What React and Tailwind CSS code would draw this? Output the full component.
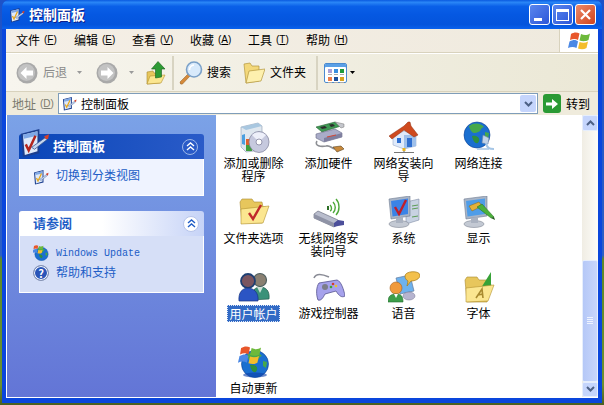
import React from "react";

const CJK = "font-['Noto_Sans_CJK_SC','Liberation_Sans',sans-serif]";

// ---- small drawn icons ----
function Svg({ size = 32, className = "", children }) {
  return (
    <svg width={size} height={size} viewBox="0 0 32 32" className={`block shrink-0 ${className}`}>
      {children}
    </svg>
  );
}

function ControlPanelIcon({ size = 32, check = "#b3261e" }) {
  return (
    <Svg size={size}>
      <path d="M2 7 L21 2 L21 27 L4 31 Z" fill="#1c3f8f" />
      <path d="M4 8 L19 4.5 L19 25 L6 29 Z" fill="#dfeafa" />
      <path d="M4 8 L19 4.5 L19 9 L5 12 Z" fill="#7fa8e6" />
      <path d="M7 18 L10 24 L17 9" fill="none" stroke={check} strokeWidth="2.6" />
      <path d="M13 21 L27 11 L29 13 L16 23 Z" fill="#c6d6ee" stroke="#38558f" strokeWidth="0.8" />
      <path d="M26 9.5 L31 7.5 L30 12.5 L27.5 12.5 Z" fill="#d6412b" />
    </Svg>
  );
}

function AddRemoveIcon() {
  return (
    <Svg>
      <path d="M3 6 L20 2 L24 5 L24 29 L8 31 L3 26 Z" fill="#dfe7ef" stroke="#8c9bb0" strokeWidth="0.6" />
      <path d="M3 6 L20 2 L24 5 L8 9 Z" fill="#a8c7e0" />
      <path d="M4 14 L7 13 L7 24 L4 23 Z" fill="#4b9fe0" />
      <rect x="8" y="18" width="6" height="6" fill="#e0602a" />
      <rect x="8" y="24" width="6" height="6" fill="#3e9e3a" />
      <rect x="14" y="18" width="4" height="6" fill="#3f78d8" />
      <ellipse cx="21" cy="21" rx="10" ry="10.5" fill="#c6c9de" stroke="#7c7e98" strokeWidth="0.7" />
      <path d="M21 21 L14 14 A10 10 0 0 1 28 14 Z" fill="#eef0fa" />
      <circle cx="21" cy="21" r="3" fill="#fff" stroke="#80829c" strokeWidth="0.8" />
    </Svg>
  );
}

function HardwareIcon() {
  return (
    <Svg>
      <path d="M3 6 L22 1 L28 5 L9 11 Z" fill="#3f9a54" stroke="#255f33" strokeWidth="0.6" />
      <path d="M7 6 L12 5 L14 7 L9 8 Z M16 3.5 L20 3 L22 5 L18 6 Z" fill="#2d2d2d" />
      <path d="M22 1 L31 3 L31 6 L28 7 Z" fill="#c4c6cc" stroke="#777" strokeWidth="0.5" />
      <path d="M3 13 L22 8 L29 12 L29 16 L11 21 L3 17 Z" fill="#a9acc8" stroke="#686a86" strokeWidth="0.6" />
      <path d="M11 17 L29 12 L29 16 L11 21 Z" fill="#7f7f9f" />
      <path d="M14 16 L23 14" stroke="#d04a3a" strokeWidth="1.2" />
      <path d="M4 20 C1 25 8 26 13 25 C17 24 18 27 22 28" fill="none" stroke="#8d8f94" strokeWidth="1.6" />
      <path d="M20 26 L28 25 L31 28 L24 31 Z" fill="#c98a3c" stroke="#5b4322" strokeWidth="0.6" />
    </Svg>
  );
}

function HouseIcon() {
  return (
    <Svg>
      <path d="M5 15 L16 10 L28 14 L28 25 L16 28 L5 24 Z" fill="#dfeafb" stroke="#8a9dbd" strokeWidth="0.5" />
      <path d="M16 14 L28 14 L28 25 L16 28 Z" fill="#9fc0ea" />
      <path d="M1 15 L16 5 L20 1 L22 1 L23 5 L30 14 L26 16 L16 9 L4 18 Z" fill="#cf4a1e" stroke="#8d2f10" strokeWidth="0.5" />
      <rect x="9" y="17" width="4" height="5" fill="#2f6fd0" />
      <rect x="19" y="17" width="5" height="9" fill="#2f6fd0" />
      <path d="M16 28 L16 32 M6 31.5 L26 31.5" stroke="#777" strokeWidth="1.2" />
      <rect x="14.5" y="27" width="3" height="3" fill="#e8b423" />
    </Svg>
  );
}

function Globe({ cx = 14, cy = 14, r = 13 }) {
  return (
    <g>
      <circle cx={cx} cy={cy} r={r} fill="#1a6fd0" stroke="#0e3f92" strokeWidth="0.6" />
      <path
        d={`M${cx - 8} ${cy - 9} C${cx - 3} ${cy - 13} ${cx + 4} ${cy - 12} ${cx + 7} ${cy - 8} C${cx + 3} ${cy - 7} ${cx + 4} ${cy - 3} ${cx + 1} ${cy - 3} C${cx - 2} ${cy - 1} ${cx - 6} ${cy - 1} ${cx - 8} ${cy - 9} Z`}
        fill="#46a84b"
      />
      <path d={`M${cx - 5} ${cy + 1} C${cx} ${cy} ${cx + 3} ${cy + 3} ${cx + 2} ${cy + 6} C${cx} ${cy + 11} ${cx - 4} ${cy + 7} ${cx - 5} ${cy + 1} Z`} fill="#2e8f3f" />
      <path d={`M${cx + 8} ${cy - 3} L${cx + 12} ${cy - 2} L${cx + 11} ${cy + 4} L${cx + 8} ${cy + 2} Z`} fill="#46a84b" />
    </g>
  );
}

function NetConnIcon() {
  return (
    <Svg>
      <Globe />
      <path d="M20 14 L26 17 L25 23 L19 22 Z" fill="#c2d3e8" stroke="#6c83a6" strokeWidth="0.6" />
      <path d="M23 22 C24 27 26 28 31 28" fill="none" stroke="#a6c6e6" strokeWidth="2" />
      <path d="M14 28 L26 28" stroke="#a6c6e6" strokeWidth="1.5" />
    </Svg>
  );
}

function FolderBase({ children }) {
  return (
    <Svg>
      <path d="M2 6 L4 3 L14 3 L16 6 L24 6 L25 11 L28 11 L24 27 L4 27 Z" fill="#e7c65c" stroke="#a98a2f" strokeWidth="0.6" />
      <path d="M3 13 L31 10 L25 27 L3 28 Z" fill="#fbe690" stroke="#b1902f" strokeWidth="0.6" />
      {children}
    </Svg>
  );
}

function WirelessIcon() {
  return (
    <Svg>
      <path d="M1 18 L5 15 L25 24 L25 28 L21 31 L1 22 Z" fill="#b9bdcd" stroke="#5e6276" strokeWidth="0.6" />
      <path d="M1 18 L21 27 L21 31 L1 22 Z" fill="#8f93a6" />
      <path d="M25 24 L31 25 L31 29 L25 30 L21 31 L21 27 Z" fill="#4c4f9a" />
      <path d="M17 9 C19 11 19 14 17 15 M20 6 C23 9 23 14 20 17 M23 3 C27 7 27 15 23 19" fill="none" stroke="#4da838" strokeWidth="1.4" />
      <rect x="14" y="10" width="2" height="4" fill="#2c6e25" />
    </Svg>
  );
}

function SystemIcon() {
  return (
    <Svg>
      <path d="M18 6 L31 3 L31 24 L18 28 Z" fill="#c8d2e2" stroke="#7f8ca4" strokeWidth="0.6" />
      <path d="M24 10 L30 9 M24 13 L30 12 M24 21 L30 20" stroke="#5d9c56" strokeWidth="1" />
      <path d="M1 3 L22 0 L22 20 L3 23 Z" fill="#a8b4c6" stroke="#6f7c92" strokeWidth="0.6" />
      <path d="M3 5 L20 2.5 L20 18 L4.5 20.5 Z" fill="#3b83e6" />
      <path d="M7 11 L11 18 L18 4" fill="none" stroke="#c01f2a" strokeWidth="2.4" />
      <ellipse cx="11" cy="28" rx="10" ry="3.5" fill="#c3c9d3" stroke="#7f8694" strokeWidth="0.6" />
      <path d="M8 22 L15 21 L15 27 L8 27 Z" fill="#aab2c0" />
    </Svg>
  );
}

function DisplayIcon() {
  return (
    <Svg>
      <path d="M1 3 L24 0 L24 20 L3 23 Z" fill="#a8b4c6" stroke="#6f7c92" strokeWidth="0.6" />
      <path d="M3 5 L22 2.5 L22 18 L4.5 20.5 Z" fill="#4f9de8" />
      <path d="M6 10 L16 6 L19 10 L9 15 Z" fill="#e5b13a" stroke="#8a6512" strokeWidth="0.5" />
      <ellipse cx="11" cy="28" rx="10" ry="3.5" fill="#c3c9d3" stroke="#7f8694" strokeWidth="0.6" />
      <path d="M8 22 L15 21 L15 27 L8 27 Z" fill="#aab2c0" />
      <path d="M14 11 L19 8 L31 21 L28 22 Z" fill="#4bb13b" stroke="#246b1c" strokeWidth="0.5" />
      <path d="M28 22 L31 21 L32 24 Z" fill="#1f5a18" />
    </Svg>
  );
}

function UsersIcon() {
  return (
    <Svg>
      <circle cx="22" cy="9" r="6.5" fill="#8a8072" stroke="#4f5f5f" strokeWidth="1.2" />
      <path d="M13 29 C13 19 18 16 22 16 C28 16 32 20 31 28 Z" fill="#3a9179" stroke="#235a4c" strokeWidth="0.7" />
      <path d="M19 16 L22 22 L25 16 Z" fill="#cfe0d8" />
      <circle cx="10" cy="10" r="7" fill="#7a5560" stroke="#1e3f73" strokeWidth="1.8" />
      <path d="M1 30 C0 21 5 17 10 17 C15 17 21 21 20 30 Z" fill="#2b55c4" stroke="#17347f" strokeWidth="0.7" />
    </Svg>
  );
}

function GamepadIcon() {
  return (
    <Svg>
      <path d="M1 7 C3 2 9 3 16 6" fill="none" stroke="#8a8c96" strokeWidth="1.6" />
      <path d="M6 12 L24 9 C28 10 31 19 32 25 C29 27 26 25 23 20 L12 23 C10 27 8 30 5 29 C3 24 3 16 6 12 Z" fill="#a6a2ec" stroke="#55538f" strokeWidth="0.8" />
      <circle cx="12" cy="16" r="3" fill="#7c7d88" />
      <circle cx="20" cy="13" r="1.3" fill="#d63b2e" />
      <circle cx="23" cy="15" r="1.3" fill="#e9c32e" />
      <circle cx="18" cy="16" r="1.3" fill="#3aa63c" />
    </Svg>
  );
}

function SpeechIcon() {
  return (
    <Svg>
      <path d="M8 7 L22 4 L26 20 L12 23 Z" fill="#6db2ee" stroke="#647a9c" strokeWidth="0.7" />
      <ellipse cx="21" cy="25" rx="6" ry="4" fill="#b6b4cf" stroke="#757390" strokeWidth="0.5" />
      <path d="M17 5 C17 0 31 -1 32 4 C32 8 27 10 23 10 L19 15 L20 10 C18 9 17 7 17 5 Z" fill="#f3c04c" stroke="#a67a14" strokeWidth="0.7" />
      <circle cx="8" cy="17" r="6" fill="#f09a3c" stroke="#a8601c" strokeWidth="0.6" />
      <path d="M0 31 C0 25 3 23 8 23 C13 23 15 25 15 31 Z" fill="#3e9e4a" stroke="#226b2d" strokeWidth="0.6" />
      <path d="M6 23 L8 27 L10 23 Z" fill="#fff" />
    </Svg>
  );
}

function FontsIcon() {
  return (
    <Svg>
      <path d="M2 9 L4 6 L14 6 L16 9 L24 9 L25 13 L28 13 L24 31 L4 31 Z" fill="#e7c65c" stroke="#a98a2f" strokeWidth="0.6" />
      <path d="M18 17 L28 1 L28 19 Z" fill="#37a237" />
      <path d="M3 17 L31 14 L25 30 L3 31 Z" fill="#fbe690" stroke="#b1902f" strokeWidth="0.6" />
      <path d="M13 27 L19 18 L20 27 M15 24 L20 23" fill="none" stroke="#a98a2f" strokeWidth="1.6" />
    </Svg>
  );
}

function Flag({ x = 0, y = 0, s = 1 }) {
  return (
    <g transform={`translate(${x} ${y}) scale(${s})`}>
      <path d="M2 2 C5 0 8 0 10.5 1.5 L9 8 C7 6.5 4 6.5 1 8 Z" fill="#e8562a" />
      <path d="M12 2 C15 3.5 18 3.5 21 1.5 L19.5 8 C17 9.5 13.5 9.5 10.5 8.5 Z" fill="#6db93b" />
      <path d="M0.5 9.5 C4 7.5 7 7.5 9 9.5 L7.5 16 C5 14.5 2 14.5 -1 16 Z" fill="#4b88e4" />
      <path d="M10.5 10 C13.5 11 16.5 11 19 9.5 L17.5 16 C15 17.5 12 17.5 9 16.5 Z" fill="#f4bd2b" />
    </g>
  );
}

function AutoUpdateIcon() {
  return (
    <Svg>
      <Globe cx={17} cy={18} r={13.5} />
      <ellipse cx="17" cy="29" rx="12" ry="2.5" fill="#0c3fa8" opacity="0.6" />
      <Flag x={1} y={0} s={1.05} />
    </Svg>
  );
}

function CircleArrow({ dir }) {
  return (
    <svg width="22" height="22" viewBox="0 0 22 22" className="block shrink-0">
      <circle cx="11" cy="11" r="10.5" fill="#a9a9a9" />
      <circle cx="10.5" cy="10.5" r="8.5" fill="#c3c3c3" />
      <path
        d={dir === "left" ? "M4.5 11 L10.5 5 L10.5 8.5 L17 8.5 L17 13.5 L10.5 13.5 L10.5 17 Z" : "M17.5 11 L11.5 5 L11.5 8.5 L5 8.5 L5 13.5 L11.5 13.5 L11.5 17 Z"}
        fill="#fff"
      />
    </svg>
  );
}

function UpFolderIcon() {
  return (
    <svg width="20" height="24" viewBox="0 0 20 24" className="block shrink-0">
      <path d="M1 11 L7 10 L8 12 L14 12 L14 22 L1 23 Z" fill="#e7c65c" stroke="#a98a2f" strokeWidth="0.6" />
      <path d="M1 23 L4 15 L19 14 L15 22 Z" fill="#fbe690" stroke="#b1902f" strokeWidth="0.6" />
      <path d="M12 0.5 L19 8 L15.5 8 L15.5 16 L9.5 17 L9.5 8 L5.5 8 Z" fill="#2e9b34" stroke="#17601c" strokeWidth="0.6" />
    </svg>
  );
}

function SearchIcon() {
  return (
    <svg width="24" height="24" viewBox="0 0 24 24" className="block shrink-0">
      <path d="M1 21 L9 13 L11 15 L3.5 23 Q1 24 1 21 Z" fill="#d68a3a" stroke="#8d5a20" strokeWidth="0.5" />
      <circle cx="15" cy="8.5" r="7.5" fill="#d8eafb" stroke="#7aa0c8" strokeWidth="1.6" />
      <path d="M10.5 9 A5 5 0 0 1 15 4" fill="none" stroke="#fff" strokeWidth="1.6" />
    </svg>
  );
}

function FolderOpenIcon() {
  return (
    <svg width="22" height="22" viewBox="0 0 22 22" className="block shrink-0">
      <path d="M1 2 L7 1 L9 4 L16 4 L16 19 L3 21 Z" fill="#f3d87a" stroke="#b3973e" strokeWidth="0.7" />
      <path d="M3 21 L6 9 L22 7 L18 19 Z" fill="#fdf0ae" stroke="#b3973e" strokeWidth="0.7" />
    </svg>
  );
}

function ViewsIcon() {
  const cells = ["#a9a0d8", "#3a8fe0", "#1f9a3a", "#ef7f4a", "#1c4f9c", "#d8a21c"];
  return (
    <div className="w-[23px] h-[20px] rounded-[2px] border border-[#4a8ad0] bg-white pt-[4px] shadow-[inset_0_3px_0_#5aa0e6]">
      <div className="grid grid-cols-3 gap-x-[3px] gap-y-[2px] px-[3px] pt-[1px]">
        {cells.map((c) => (
          <div key={c}>
            <div className="h-[4px] w-[4px]" style={{ background: c }} />
            <div className="h-px w-[4px] mt-px bg-[#aaaaaa]" />
          </div>
        ))}
      </div>
    </div>
  );
}

function Caret({ color = "#000000" }) {
  return (
    <svg width="5" height="3" viewBox="0 0 5 3" className="block shrink-0">
      <path d="M0 0 L5 0 L2.5 3 Z" fill={color} />
    </svg>
  );
}

function Chevrons({ color = "#215dc6" }) {
  return (
    <svg width="9" height="9" viewBox="0 0 9 9" className="block">
      <path d="M1 4 L4.5 1 L8 4 M1 8 L4.5 5 L8 8" fill="none" stroke={color} strokeWidth="1.4" />
    </svg>
  );
}

function WinLogo() {
  return (
    <svg width="22" height="20" viewBox="0 0 22 20" className="block">
      <Flag x={1} y={1} />
    </svg>
  );
}

function WinUpdateSmall() {
  return (
    <svg width="16" height="16" viewBox="0 0 32 32" className="block shrink-0">
      <Globe cx={17} cy={18} r={13.5} />
      <Flag x={0} y={0} s={1} />
    </svg>
  );
}

function HelpSmall() {
  return (
    <div className={`flex h-[16px] w-[16px] shrink-0 items-center justify-center rounded-full border border-[#8a96b4] bg-[#2a55b8] text-[11px] font-bold leading-none text-white shadow-[inset_0_0_0_1px_#ffffff] ${CJK}`}>
      ?
    </div>
  );
}

// ---- chrome pieces ----
function Mnemonic({ k }) {
  return (
    <span className="ml-[4px] inline-block w-[13px] font-['Liberation_Sans',sans-serif] text-[10px]">
      (<span className="underline">{k}</span>)
    </span>
  );
}

function WinBtn({ className = "", children }) {
  return (
    <div className={`flex h-[21px] w-[21px] items-center justify-center rounded-[3px] border border-white ${className}`}>
      {children}
    </div>
  );
}

function ScrollBtn({ dir }) {
  return (
    <div className="flex h-[16px] items-center justify-center rounded-[2px] border border-[#e6eefc] bg-[#c5d5fc]">
      <Chevron dir={dir} />
    </div>
  );
}

function Chevron({ dir }) {
  return (
    <svg width="9" height="6" viewBox="0 0 9 6" className="block">
      <path d={dir === "up" ? "M1 5 L4.5 1.5 L8 5" : "M1 1 L4.5 4.5 L8 1"} fill="none" stroke="#4d6185" strokeWidth="2" />
    </svg>
  );
}

const ITEMS = [
  { label: "添加或删除程序", Icon: AddRemoveIcon },
  { label: "添加硬件", Icon: HardwareIcon },
  { label: "网络安装向导", Icon: HouseIcon },
  { label: "网络连接", Icon: NetConnIcon },
  {
    label: "文件夹选项",
    Icon: () => (
      <FolderBase>
        <path d="M11 17 L15 23 L23 9" fill="none" stroke="#c0282a" strokeWidth="2.4" />
      </FolderBase>
    ),
  },
  { label: "无线网络安装向导", Icon: WirelessIcon },
  { label: "系统", Icon: SystemIcon },
  { label: "显示", Icon: DisplayIcon },
  { label: "用户帐户", Icon: UsersIcon, selected: true },
  { label: "游戏控制器", Icon: GamepadIcon },
  { label: "语音", Icon: SpeechIcon },
  { label: "字体", Icon: FontsIcon },
  { label: "自动更新", Icon: AutoUpdateIcon },
];

export default function App() {
  return (
    <div className={`h-[405px] w-[604px] overflow-hidden bg-[linear-gradient(180deg,#1d52c8_0%,#2c5fc6_63%,#5c8a2a_64%,#6c9230_95%,#4a5e22_100%)] pl-[2px] text-[12px] leading-[13px] text-black ${CJK}`}>
      <div className="flex h-[403px] w-[600px] flex-col rounded-t-[7px] bg-[#0a46dc]">
        {/* title bar */}
        <div className="flex h-[29px] shrink-0 items-center rounded-t-[7px] bg-[linear-gradient(180deg,#0a5ae0_0%,#2a86f6_8%,#0a60e8_22%,#0558e2_50%,#0454dc_85%,#0a62ee_100%)] pl-[7px] pr-[6px]">
          <ControlPanelIcon size={16} check="#e8a81c" />
          <span className="ml-[4px] text-[14px] font-bold text-white [text-shadow:1px_1px_0_#0f1f8a]">控制面板</span>
          <div className="ml-auto flex items-center gap-[2px]">
            <WinBtn className="bg-[linear-gradient(135deg,#5a86ee,#2c56d8)]">
              <div className="mt-[9px] mr-[3px] h-[3px] w-[8px] bg-white" />
            </WinBtn>
            <WinBtn className="bg-[linear-gradient(135deg,#5a86ee,#2c56d8)]">
              <div className="h-[12px] w-[13px] border border-t-[3px] border-white" />
            </WinBtn>
            <WinBtn className="bg-[linear-gradient(135deg,#ec8a6a,#d0431c)]">
              <svg width="13" height="13" viewBox="0 0 13 13">
                <path d="M2 2 L11 11 M11 2 L2 11" stroke="#fff" strokeWidth="2.2" />
              </svg>
            </WinBtn>
          </div>
        </div>

        {/* client area */}
        <div className="mx-[4px] mb-[5px] flex min-h-0 flex-1 flex-col">
          {/* menu bar */}
          <div className="flex h-[24px] shrink-0 items-stretch border-b border-[#d8d2bd] bg-[linear-gradient(90deg,#f5efe6,#efeade)]">
            <div className="flex flex-1 items-center gap-[17px] pb-[2px] pl-[10px]">
              {[["文件", "F"], ["编辑", "E"], ["查看", "V"], ["收藏", "A"], ["工具", "T"], ["帮助", "H"]].map(([t, k]) => (
                <span key={k} className="flex w-[41px] items-center whitespace-nowrap">
                  {t}
                  <Mnemonic k={k} />
                </span>
              ))}
            </div>
            <div className="flex w-[39px] items-center justify-center border-l border-[#d8d2bd] bg-white">
              <WinLogo />
            </div>
          </div>

          {/* toolbar */}
          <div className="flex h-[39px] shrink-0 items-center border-b border-t border-b-[#d8d2bd] border-t-white bg-[linear-gradient(90deg,#f7f5ee,#ebe8d6)] pl-[10px]">
            <CircleArrow dir="left" />
            <span className="ml-[5px] w-[24px] -translate-y-px text-[#8a8a8a]">后退</span>
            <div className="ml-[10px]"><Caret color="#9a9a9a" /></div>
            <div className="ml-[14px]"><CircleArrow dir="right" /></div>
            <div className="ml-[11px]"><Caret color="#9a9a9a" /></div>
            <div className="ml-[12px]"><UpFolderIcon /></div>
            <div className="ml-[6px] h-[34px] w-[2px] bg-[#d8d4c2]" />
            <div className="ml-[5px]"><SearchIcon /></div>
            <span className="ml-[4px] w-[24px] -translate-y-px">搜索</span>
            <div className="ml-[12px]"><FolderOpenIcon /></div>
            <span className="ml-[5px] w-[36px] -translate-y-px">文件夹</span>
            <div className="ml-[10px] h-[34px] w-[2px] bg-[#d8d4c2]" />
            <div className="ml-[6px]"><ViewsIcon /></div>
            <div className="ml-[3px]"><Caret /></div>
          </div>

          {/* address bar */}
          <div className="flex h-[23px] shrink-0 items-center bg-[#efebdc] pl-[6px]">
            <span className="flex w-[46px] items-center whitespace-nowrap text-[#7a7a6e]">
              地址
              <Mnemonic k="D" />
            </span>
            <div className="flex h-[21px] w-[480px] items-center border border-[#7f9db9] bg-white pl-[3px] pr-px">
              <ControlPanelIcon size={15} check="#e8a81c" />
              <span className="ml-[4px]">控制面板</span>
              <div className="ml-auto flex h-[17px] w-[16px] items-center justify-center rounded-[2px] bg-[#c5d5fc]">
                <Chevron dir="down" />
              </div>
            </div>
            <div className="ml-[5px] flex h-[19px] w-[18px] items-center justify-center rounded-[3px] bg-[#2a9a34]">
              <svg width="14" height="14" viewBox="0 0 14 14">
                <path d="M1 5.5 L7 5.5 L7 2 L13 7 L7 12 L7 8.5 L1 8.5 Z" fill="#fff" />
              </svg>
            </div>
            <span className="ml-[5px]">转到</span>
          </div>

          {/* main */}
          <div className="flex min-h-0 flex-1 border-b border-white bg-white">
            {/* task pane */}
            <div className="h-full w-[210px] shrink-0 border-l border-white bg-[linear-gradient(180deg,#7ba2e7,#6375d6)] pl-[12px] pt-[19px]">
              <div className="w-[185px]">
                <div className="relative flex h-[25px] items-center rounded-t-[3px] bg-[linear-gradient(90deg,#0a46b8,#2a5bc8)] pl-[34px] pr-[6px]">
                  <div className="absolute left-0 top-[-7px]">
                    <ControlPanelIcon size={31} />
                  </div>
                  <span className="-translate-y-px text-[13px] font-bold text-white">控制面板</span>
                  <div className="ml-auto flex h-[16px] w-[16px] items-center justify-center rounded-full border border-[#9db7e8] bg-[#2a5bc8]">
                    <Chevrons color="#ffffff" />
                  </div>
                </div>
                <div className="flex h-[37px] items-start border border-t-0 border-white bg-[#eff3ff] pl-[13px] pt-[10px]">
                  <ControlPanelIcon size={16} check="#e8a81c" />
                  <span className="ml-[7px] -mt-px text-[#215dc6]">切换到分类视图</span>
                </div>
              </div>

              <div className="mt-[15px] w-[185px]">
                <div className="flex h-[25px] items-center rounded-t-[3px] bg-[linear-gradient(90deg,#ffffff_0%,#ffffff_45%,#c6d3f7_100%)] pl-[14px] pr-[5px]">
                  <span className="-translate-y-px text-[13px] font-bold text-[#215dc6]">请参阅</span>
                  <div className="ml-auto flex h-[16px] w-[16px] items-center justify-center rounded-full border border-[#b6c4ea] bg-white">
                    <Chevrons />
                  </div>
                </div>
                <div className="h-[57px] border border-t-0 border-white bg-[#d6dff7] pl-[13px] pt-[8px] text-[#215dc6]">
                  <div className="flex h-[18px] items-center">
                    <WinUpdateSmall />
                    <span className="ml-[7px] font-['Liberation_Mono',monospace] text-[10px]">Windows Update</span>
                  </div>
                  <div className="mt-[2px] flex h-[18px] items-center">
                    <HelpSmall />
                    <span className="ml-[7px] -translate-y-[2px]">帮助和支持</span>
                  </div>
                </div>
              </div>
            </div>

            {/* icon list */}
            <div className="min-w-0 flex-1 overflow-hidden bg-white">
              <div className="grid grid-cols-[repeat(4,75px)] auto-rows-[75px]">
                {ITEMS.map(({ label, Icon, selected }) => (
                  <div key={label} className="flex flex-col items-center pt-[6px]">
                    <Icon />
                    {selected ? (
                      <span className="mt-[2px] border border-dotted border-[#dfe8f8] bg-[#316ac5] px-px py-px text-white">{label}</span>
                    ) : (
                      <span className="mt-[3px] w-[62px] text-center">{label}</span>
                    )}
                  </div>
                ))}
              </div>
            </div>

            {/* scrollbar */}
            <div className="flex h-full w-[16px] shrink-0 flex-col bg-[linear-gradient(90deg,#f0ede4,#fdfcf8)]">
              <ScrollBtn dir="up" />
              <div className="flex-1 pt-[129px]">
                <div className="flex h-[122px] flex-col items-center justify-center gap-px rounded-[2px] border border-[#e6eefc] bg-[linear-gradient(90deg,#b5c8f7,#c8d6fb)]">
                  {[0, 1, 2, 3].map((i) => (
                    <div key={i} className="h-px w-[6px] bg-[#eef3ff]" />
                  ))}
                </div>
              </div>
              <ScrollBtn dir="down" />
            </div>
          </div>
        </div>
      </div>
    </div>
  );
}
